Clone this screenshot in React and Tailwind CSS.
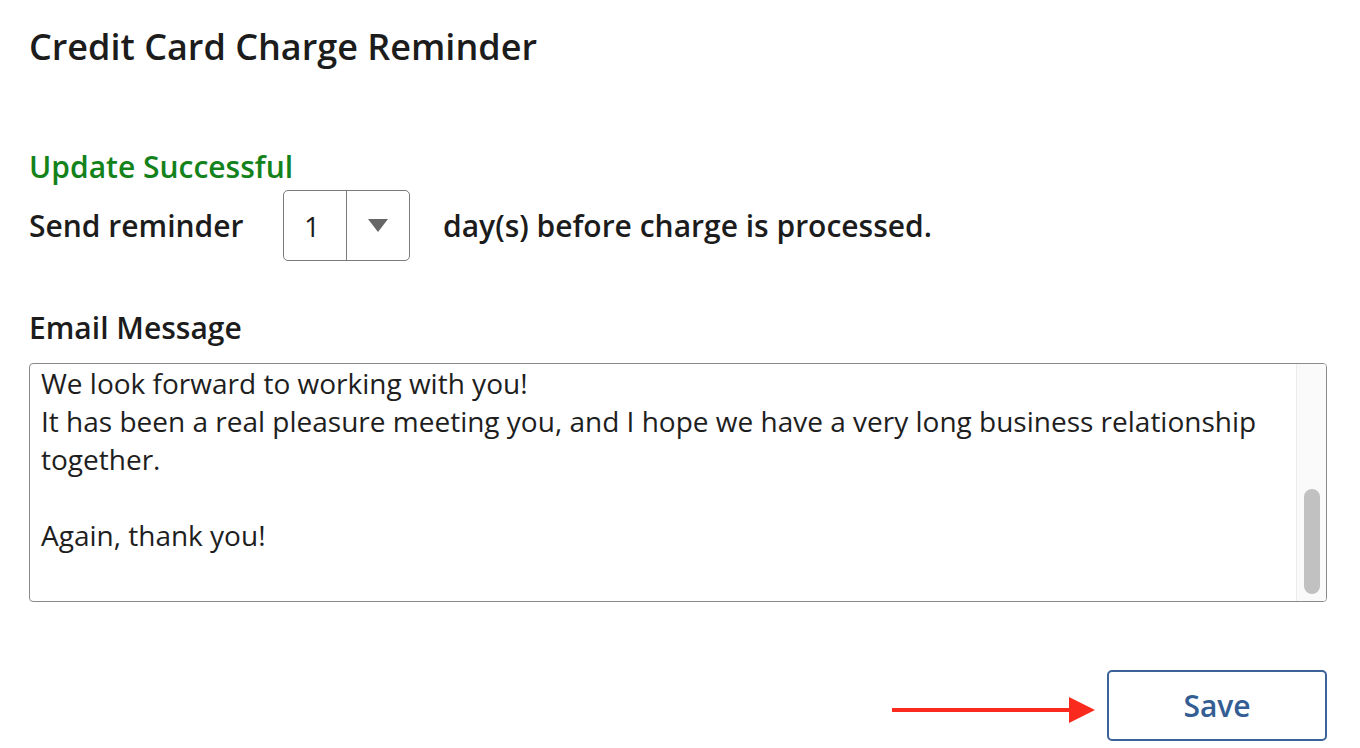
import React from "react";

const lines = [
  "We look forward to working with you!",
  "It has been a real pleasure meeting you, and I hope we have a very long business relationship",
  "together.",
  "",
  "Again, thank you!",
];

export default function App() {
  return (
    <div
      className="w-[1360px] h-[748px] bg-white text-[#1c1c1c] pl-[29px] pr-[33px] overflow-hidden"
      style={{ fontFamily: '"Open Sans", sans-serif' }}
    >
      <h1 className="pt-[24px] text-[36px] leading-[46px] font-semibold">Credit Card Charge Reminder</h1>

      <p className="mt-[78px] text-[30px] leading-[38px] font-semibold text-[#13821a]">Update Successful</p>

      <div className="mt-[4px] flex items-center">
        <span className="w-[254px] text-[30px] font-semibold">Send reminder</span>
        <div className="flex h-[71px] w-[127px] rounded-[5px] border border-[#7b7b7b]">
          <div className="w-[62px] flex items-center pl-[20px] text-[28px]">1</div>
          <div className="flex-1 border-l border-[#7b7b7b] flex items-center justify-center">
            <svg width="20" height="13" viewBox="0 0 20 13">
              <path d="M0 0 H20 L10 13 Z" fill="#666" />
            </svg>
          </div>
        </div>
        <span className="ml-[33px] text-[30px] font-semibold">day(s) before charge is processed.</span>
      </div>

      <p className="mt-[48px] text-[30px] leading-[38px] font-semibold">Email Message</p>

      <div className="mt-[16px] h-[239px] flex rounded-[4px] border border-[#8a8a8a] overflow-hidden">
        <div className="flex-1 pl-[11px] text-[28px] leading-[38px] text-[#1e1e1e]">
          {lines.map((l, i) => (
            <div key={i} className="h-[38px] whitespace-nowrap">{l}</div>
          ))}
        </div>
        <div className="w-[30px] bg-[#fafafa] border-l border-[#ebebeb] flex flex-col justify-end items-center pb-[7px]">
          <div className="w-[16px] h-[105px] rounded-full bg-[#c1c1c1]" />
        </div>
      </div>

      <div className="mt-[68px] flex items-center justify-end">
        <svg width="204" height="28" viewBox="0 0 204 28" className="mr-[11px] mt-[8px]">
          <rect x="0" y="12" width="180" height="4" fill="#fa2a1e" />
          <path d="M177 1 L203 14 L177 27 Z" fill="#fa2a1e" />
        </svg>
        <button className="w-[220px] h-[71px] rounded-[5px] border-2 border-[#3b6399] text-[#335d93] text-[30px] font-semibold">
          Save
        </button>
      </div>
    </div>
  );
}
